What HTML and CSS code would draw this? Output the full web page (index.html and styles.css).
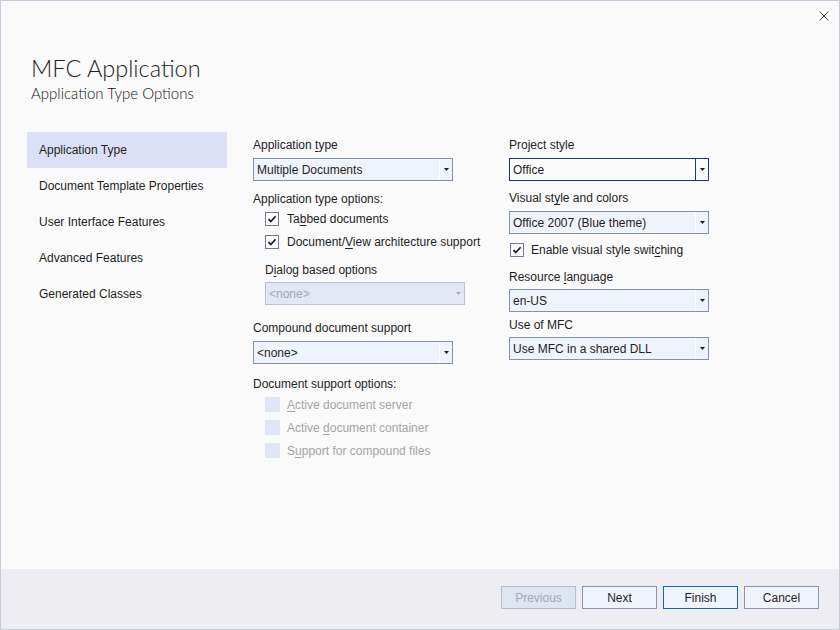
FILE: index.html
```html
<!DOCTYPE html>
<html lang="en">
<head>
<meta charset="utf-8">
<title>MFC Application</title>
<link rel="stylesheet" href="styles.css">
</head>
<body>
<div class="window">
  <div class="titlebar">
    <button class="close" aria-label="Close">
      <svg width="10" height="10" viewBox="0 0 10 10"><path d="M0.5 0.5 L9.5 9.5 M9.5 0.5 L0.5 9.5" stroke="#4a4a4a" stroke-width="1" fill="none"/></svg>
    </button>
  </div>
  <header class="header">
    <h1 class="title">MFC Application</h1>
    <p class="subtitle">Application Type Options</p>
  </header>
  <div class="main">
    <nav class="nav">
      <div class="nav-item active">Application Type</div>
      <div class="nav-item">Document Template Properties</div>
      <div class="nav-item">User Interface Features</div>
      <div class="nav-item">Advanced Features</div>
      <div class="nav-item">Generated Classes</div>
    </nav>
    <section class="col col-mid">
      <div class="label">Application <u>t</u>ype</div>
      <div class="combo gap-label">
        <span class="combo-value">Multiple Documents</span>
        <span class="combo-btn"><svg width="5" height="3" viewBox="0 0 5 3"><polygon points="0,0 5,0 2.5,3" fill="#1e1e1e"/></svg></span>
      </div>
      <div class="label sp-10">Application type options:</div>
      <div class="check indent">
        <span class="box"><svg width="12" height="12" viewBox="0 0 12 12"><path d="M2.5 6.2 L4.8 8.6 L9.6 3.2" stroke="#1a1a1a" stroke-width="1.7" fill="none"/></svg></span>
        <span>Ta<u>b</u>bed documents</span>
      </div>
      <div class="check indent">
        <span class="box"><svg width="12" height="12" viewBox="0 0 12 12"><path d="M2.5 6.2 L4.8 8.6 L9.6 3.2" stroke="#1a1a1a" stroke-width="1.7" fill="none"/></svg></span>
        <span>Document/<u>V</u>iew architecture support</span>
      </div>
      <div class="label indent-label sp-9">D<u>i</u>alog based options</div>
      <div class="combo disabled indent-combo gap-label-sm">
        <span class="combo-value">&lt;none&gt;</span>
        <span class="combo-btn"><svg width="5" height="3" viewBox="0 0 5 3"><polygon points="0,0 5,0 2.5,3" fill="#a8acb6"/></svg></span>
      </div>
      <div class="label sp-15">Compound document support</div>
      <div class="combo gap-label">
        <span class="combo-value">&lt;none&gt;</span>
        <span class="combo-btn"><svg width="5" height="3" viewBox="0 0 5 3"><polygon points="0,0 5,0 2.5,3" fill="#1e1e1e"/></svg></span>
      </div>
      <div class="label sp-12">Document support options:</div>
      <div class="check indent disabled-check sp-1">
        <span class="box box-off"></span>
        <span><u>A</u>ctive document server</span>
      </div>
      <div class="check indent disabled-check">
        <span class="box box-off"></span>
        <span>Active <u>d</u>ocument container</span>
      </div>
      <div class="check indent disabled-check">
        <span class="box box-off"></span>
        <span>S<u>u</u>pport for compound files</span>
      </div>
    </section>
    <section class="col col-right">
      <div class="label">Project style</div>
      <div class="combo focused gap-label">
        <span class="combo-value">Office</span>
        <span class="combo-btn"><svg width="5" height="3" viewBox="0 0 5 3"><polygon points="0,0 5,0 2.5,3" fill="#1e1e1e"/></svg></span>
      </div>
      <div class="label sp-9">Visual st<u>y</u>le and colors</div>
      <div class="combo gap-label">
        <span class="combo-value">Office 2007 (Blue theme)</span>
        <span class="combo-btn"><svg width="5" height="3" viewBox="0 0 5 3"><polygon points="0,0 5,0 2.5,3" fill="#1e1e1e"/></svg></span>
      </div>
      <div class="check check-right sp-4">
        <span class="box"><svg width="12" height="12" viewBox="0 0 12 12"><path d="M2.5 6.2 L4.8 8.6 L9.6 3.2" stroke="#1a1a1a" stroke-width="1.7" fill="none"/></svg></span>
        <span>Enable visual style swit<u>c</u>hing</span>
      </div>
      <div class="label sp-8">Resource <u>l</u>anguage</div>
      <div class="combo gap-label-sm">
        <span class="combo-value">en-US</span>
        <span class="combo-btn"><svg width="5" height="3" viewBox="0 0 5 3"><polygon points="0,0 5,0 2.5,3" fill="#1e1e1e"/></svg></span>
      </div>
      <div class="label sp-5">Use of MFC</div>
      <div class="combo gap-label-sm">
        <span class="combo-value">Use MFC in a shared DLL</span>
        <span class="combo-btn"><svg width="5" height="3" viewBox="0 0 5 3"><polygon points="0,0 5,0 2.5,3" fill="#1e1e1e"/></svg></span>
      </div>
    </section>
  </div>
  <footer class="footer">
    <button class="btn btn-disabled">Previous</button>
    <button class="btn">Next</button>
    <button class="btn btn-default">Finish</button>
    <button class="btn">Cancel</button>
  </footer>
</div>
</body>
</html>
```

FILE: styles.css
```css
html, body {
  margin: 0;
  padding: 0;
}

body {
  width: 840px;
  height: 630px;
  font-family: "Liberation Sans", Arial, sans-serif;
  font-size: 12px;
  color: #1e1e1e;
  background: #fafafa;
}

.window {
  box-sizing: border-box;
  width: 840px;
  height: 630px;
  border: 1px solid #c8cbdd;
  background: #fafafa;
  display: flex;
  flex-direction: column;
}

.titlebar {
  height: 52px;
  display: flex;
  justify-content: flex-end;
  align-items: flex-start;
}

.close {
  margin: 10px 10px 0 0;
  padding: 0;
  border: 0;
  background: transparent;
  width: 10px;
  height: 10px;
  display: block;
}

.close svg {
  display: block;
}

.header {
  padding-left: 30px;
}

.title {
  margin: 0;
  font-family: Lato, "Open Sans", sans-serif;
  font-weight: 300;
  font-size: 23.5px;
  line-height: 30px;
  color: #1e1e1e;
}

.subtitle {
  margin: 0;
  font-family: Lato, "Open Sans", sans-serif;
  font-weight: 300;
  font-size: 15px;
  line-height: 20px;
  color: #111111;
}

.main {
  display: flex;
  margin-top: 29px;
  padding-left: 26px;
}

.nav {
  width: 200px;
  flex: none;
  display: flex;
  flex-direction: column;
}

.nav-item {
  height: 36px;
  line-height: 36px;
  padding-left: 12px;
}

.nav-item.active {
  background: #dce0f6;
}

.col {
  display: flex;
  flex-direction: column;
  padding-top: 5px;
  flex: none;
}

.col-mid {
  margin-left: 26px;
  width: 256px;
}

.col-right {
  width: 200px;
}

.label {
  line-height: 16px;
  white-space: nowrap;
}

.indent-label {
  padding-left: 12px;
}

u {
  text-decoration-thickness: 1px;
  text-underline-offset: 2px;
}

.sp-1 { margin-top: 1px; }
.sp-4 { margin-top: 4px; }
.sp-5 { margin-top: 5px; }
.sp-8 { margin-top: 8px; }
.sp-9 { margin-top: 9px; }
.sp-10 { margin-top: 10px; }
.sp-12 { margin-top: 12px; }
.sp-15 { margin-top: 15px; }

.gap-label { margin-top: 5px; }
.gap-label-sm { margin-top: 4px; }

.combo {
  box-sizing: border-box;
  width: 200px;
  height: 23px;
  border: 1px solid #8592ae;
  background: #eff3fc;
  display: flex;
  align-items: stretch;
}

.combo-value {
  flex: 1;
  padding-left: 3px;
  line-height: 22px;
  white-space: nowrap;
}

.combo-btn {
  width: 12px;
  border-left: 1px solid #fbfcff;
  display: flex;
  align-items: center;
  justify-content: center;
}

.combo-btn svg {
  display: block;
}

.combo.focused {
  border-color: #1c3677;
  background: #fbfbfb;
}

.combo.focused .combo-btn {
  border-left-color: #1c3677;
}

.combo.disabled {
  border-color: #b9c1d5;
  background: #e2e7f3;
  color: #a3a6ad;
}

.combo.disabled .combo-btn {
  border-left-color: #e2e7f3;
}

.indent-combo {
  margin-left: 12px;
}

.check {
  height: 23px;
  display: flex;
  align-items: center;
  gap: 8px;
  white-space: nowrap;
}

.check.indent {
  padding-left: 12px;
}

.check-right {
  padding-left: 1px;
  gap: 7px;
}

.box {
  box-sizing: border-box;
  width: 14px;
  height: 14px;
  border: 1px solid #6f7b97;
  background: #fdfdfd;
  display: flex;
  align-items: center;
  justify-content: center;
  flex: none;
}

.box svg {
  display: block;
}

.box-off {
  width: 15px;
  height: 15px;
  border: 0;
  background: #e1e6f4;
}

.disabled-check {
  color: #a3a4a8;
  gap: 7px;
}

.footer {
  margin-top: auto;
  height: 60px;
  box-sizing: border-box;
  background: #eeeef2;
  display: flex;
  justify-content: flex-end;
  align-items: flex-start;
  gap: 6px;
  padding: 17px 20px 0 0;
}

.btn {
  box-sizing: border-box;
  width: 75px;
  height: 23px;
  margin: 0;
  padding: 0;
  border: 1px solid #8a96b0;
  background: #f0f4fc;
  font-family: "Liberation Sans", Arial, sans-serif;
  font-size: 12px;
  color: #1e1e1e;
}

.btn-default {
  border-color: #1367c0;
}

.btn-disabled {
  border-color: #b4bccd;
  background: #dfe5f0;
  color: #a5a8af;
}
```
